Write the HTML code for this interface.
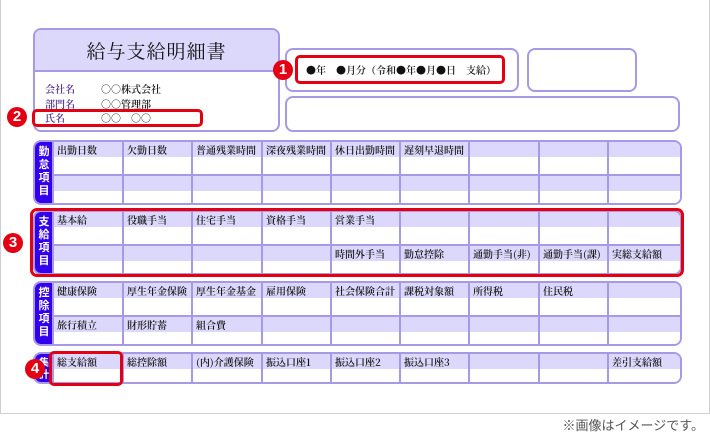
<!DOCTYPE html>
<html><head><meta charset="utf-8"><style>
*{margin:0;padding:0;box-sizing:border-box}
body{width:710px;height:435px;background:#fff;position:relative;overflow:hidden;font-family:"Noto Serif CJK JP","Noto Serif CJK SC",serif;color:#111}
.abs{position:absolute}
.frame{left:0;top:0;width:710px;height:414px;border:1px solid #cfcfcf;border-top:none}
.box{position:absolute;border:2px solid #a899e6;border-radius:8px;background:#fff}
.red{position:absolute;border:3px solid #e30012;border-radius:5px}
.badge{position:absolute;width:20px;height:20px;border-radius:50%;background:#e30012;color:#fff;font:bold 15px/20px "Liberation Sans",sans-serif;text-align:center}
.sec{position:absolute;left:33px;width:649px;border:2px solid #a899e6;border-radius:8px;overflow:hidden;background:#fff}
.lab{position:absolute;left:0;top:0;bottom:0;width:18px;background:#3300ee;color:#fff;font-size:11px;line-height:13px;text-align:center;font-family:"Noto Sans CJK JP",sans-serif;font-weight:bold;padding-top:3px}
.grid{position:absolute;left:17px;top:0;right:0}
.row{display:flex;height:32px;border-top:2px solid #a899e6}
.row:first-child{border-top:none}
.c{border-left:2px solid #a899e6;background:linear-gradient(#dcd8fb 0 15px,#fff 15px);font-size:10px;line-height:15px;padding-left:3px;white-space:nowrap;overflow:hidden;font-weight:600}
.w1{width:70px}.w2{width:69px}.w3{width:70px}.w4{width:69px}.w5{width:69px}.w6{width:69px}.w7{width:70px}.w8{width:69px}.w9{flex:1}
</style></head><body>
<div class="abs frame"></div>

<div class="box" style="left:33px;top:28px;width:247px;height:104px;overflow:hidden">
 <div style="height:42px;background:#dcd8fb;border-bottom:2px solid #a899e6;text-align:center;font-size:19px;line-height:42px;letter-spacing:1px">給与支給明細書</div>
 <div style="position:absolute;left:10px;top:52px;font-size:10px;line-height:14.5px;color:#4b2a8a;font-weight:600">会社名<br>部門名<br>氏名</div>
 <div style="position:absolute;left:66px;top:52px;font-size:10px;line-height:14.5px;font-weight:600">○○株式会社<br>○○管理部<br>○○　○○</div>
</div>
<div class="red" style="left:32px;top:109px;width:171px;height:18px"></div>

<div class="box" style="left:285px;top:48px;width:234px;height:44px"></div>
<div class="red" style="left:295px;top:55px;width:210px;height:29px"></div>
<div class="abs" style="left:306px;top:62px;font-size:10px;line-height:16px;font-weight:600">●年　●月分（令和●年●月●日　支給）</div>
<div class="box" style="left:527px;top:48px;width:110px;height:44px"></div>
<div class="box" style="left:285px;top:96px;width:395px;height:36px"></div>

<div class="sec" style="top:140px;height:65px">
 <div class="lab">勤<br>怠<br>項<br>目</div>
 <div class="grid">
  <div class="row"><div class="c w1">出勤日数</div><div class="c w2">欠勤日数</div><div class="c w3">普通残業時間</div><div class="c w4">深夜残業時間</div><div class="c w5">休日出勤時間</div><div class="c w6">遅刻早退時間</div><div class="c w7"></div><div class="c w8"></div><div class="c w9"></div></div>
  <div class="row"><div class="c w1"></div><div class="c w2"></div><div class="c w3"></div><div class="c w4"></div><div class="c w5"></div><div class="c w6"></div><div class="c w7"></div><div class="c w8"></div><div class="c w9"></div></div>
 </div>
</div>
<div class="sec" style="top:210px;height:65px">
 <div class="lab">支<br>給<br>項<br>目</div>
 <div class="grid">
  <div class="row"><div class="c w1">基本給</div><div class="c w2">役職手当</div><div class="c w3">住宅手当</div><div class="c w4">資格手当</div><div class="c w5">営業手当</div><div class="c w6"></div><div class="c w7"></div><div class="c w8"></div><div class="c w9"></div></div>
  <div class="row"><div class="c w1"></div><div class="c w2"></div><div class="c w3"></div><div class="c w4"></div><div class="c w5">時間外手当</div><div class="c w6">勤怠控除</div><div class="c w7">通勤手当(非)</div><div class="c w8">通勤手当(課)</div><div class="c w9">実総支給額</div></div>
 </div>
</div>
<div class="red" style="left:30px;top:208px;width:654px;height:69px;border-radius:7px"></div>
<div class="sec" style="top:281px;height:65px">
 <div class="lab">控<br>除<br>項<br>目</div>
 <div class="grid">
  <div class="row"><div class="c w1">健康保険</div><div class="c w2">厚生年金保険</div><div class="c w3">厚生年金基金</div><div class="c w4">雇用保険</div><div class="c w5">社会保険合計</div><div class="c w6">課税対象額</div><div class="c w7">所得税</div><div class="c w8">住民税</div><div class="c w9"></div></div>
  <div class="row"><div class="c w1">旅行積立</div><div class="c w2">財形貯蓄</div><div class="c w3">組合費</div><div class="c w4"></div><div class="c w5"></div><div class="c w6"></div><div class="c w7"></div><div class="c w8"></div><div class="c w9"></div></div>
 </div>
</div>
<div class="sec" style="top:352px;height:32px">
 <div class="lab" style="font-size:10px;line-height:12px;padding-top:2px">集<br>計</div>
 <div class="grid">
  <div class="row" style="height:30px"><div class="c w1">総支給額</div><div class="c w2">総控除額</div><div class="c w3">(内)介護保険</div><div class="c w4">振込口座1</div><div class="c w5">振込口座2</div><div class="c w6">振込口座3</div><div class="c w7"></div><div class="c w8"></div><div class="c w9">差引支給額</div></div>
 </div>
</div>
<div class="red" style="left:49px;top:351px;width:74px;height:35px"></div>

<div class="badge" style="left:273px;top:60px">1</div>
<div class="badge" style="left:7px;top:107px">2</div>
<div class="badge" style="left:3px;top:233px">3</div>
<div class="badge" style="left:25px;top:359px">4</div>

<div class="abs" style="right:6px;top:417px;font:13px/16px 'Noto Sans CJK JP',sans-serif;color:#555">※画像はイメージです。</div>
</body></html>
